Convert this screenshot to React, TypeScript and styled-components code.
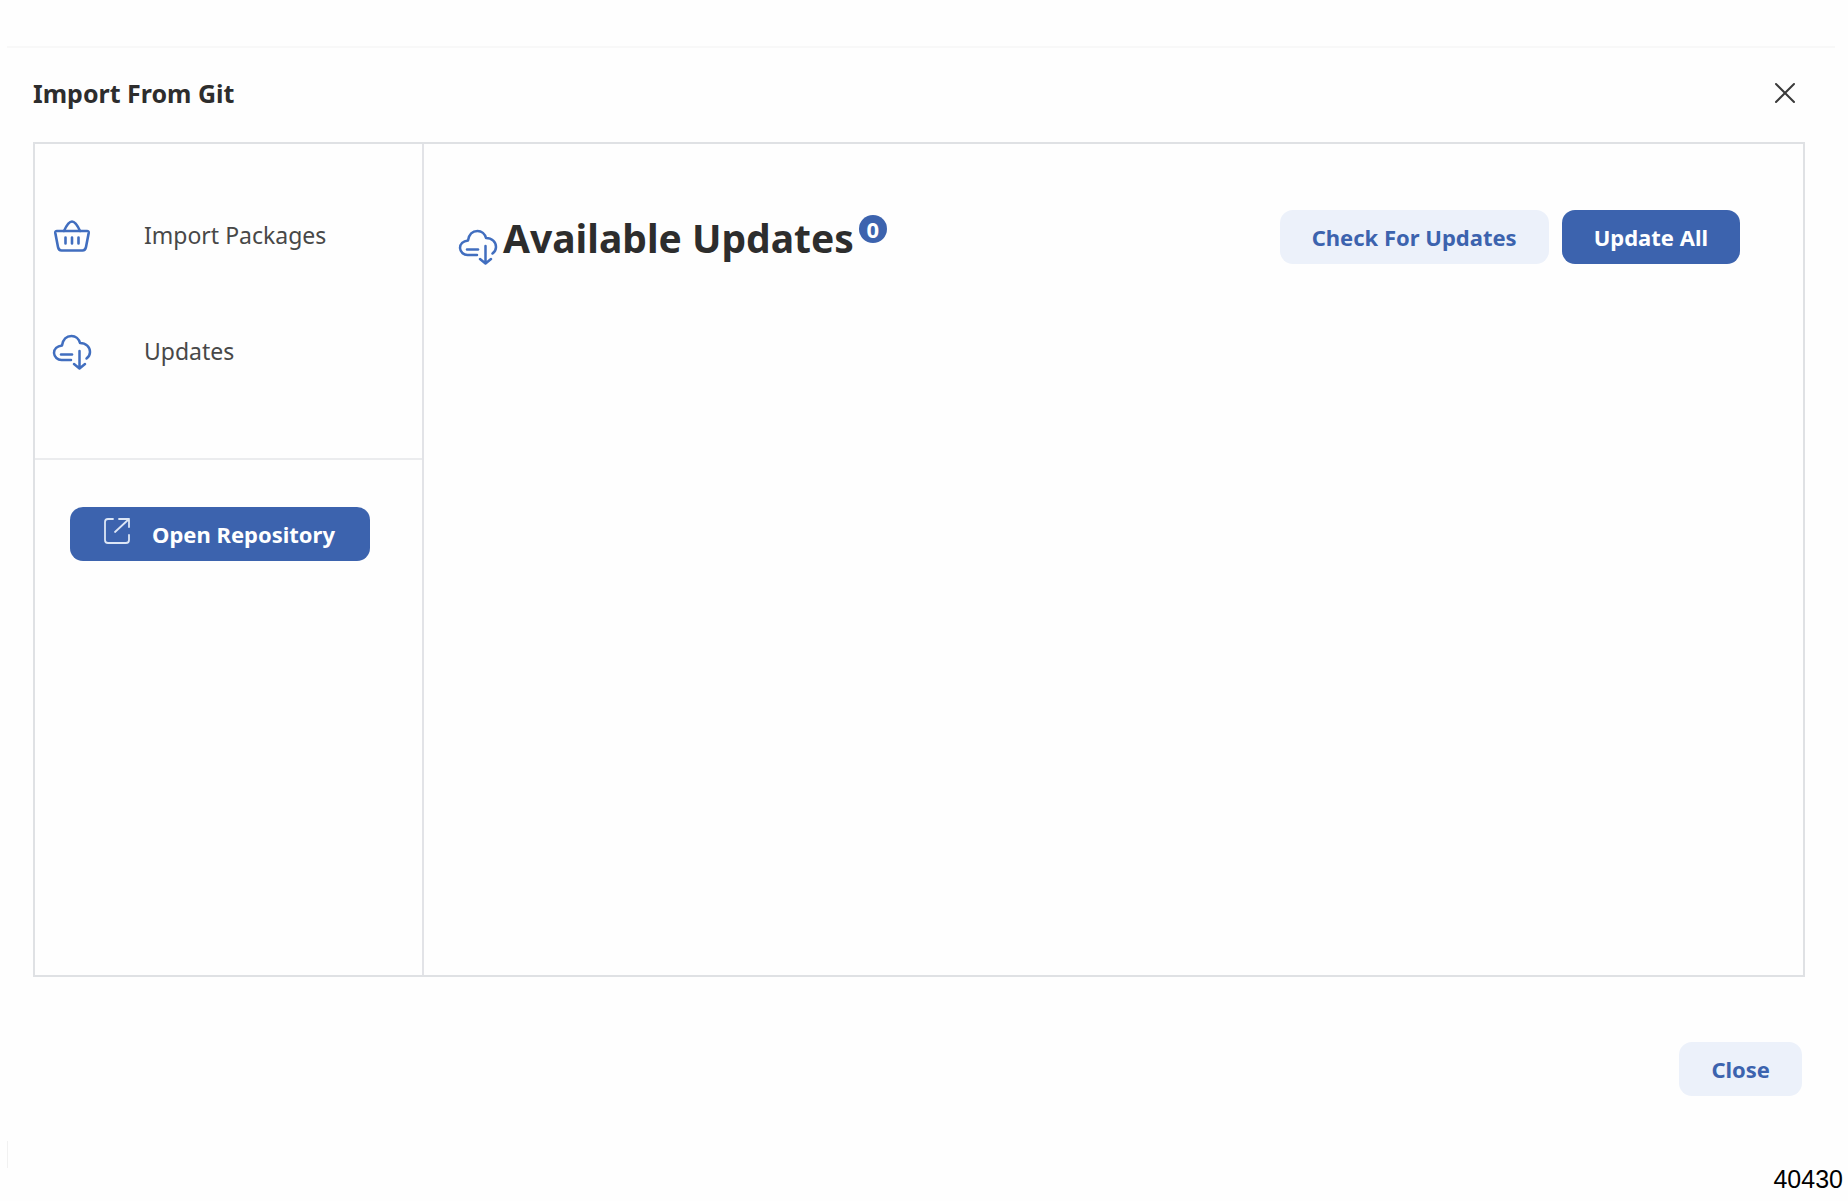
import React from "react";
import styled, { createGlobalStyle } from "styled-components";

const blue = "#3c63ae";
const ink = "#2d2d2d";
const pale = "#ecf1fa";

const GlobalStyle = createGlobalStyle`
  *, *::before, *::after { box-sizing: border-box; }
  body {
    margin: 0;
    background: #fefefe;
    color: ${ink};
    font-family: "Noto Sans", "Open Sans", sans-serif;
  }
  h1, h2, p, ul { margin: 0; padding: 0; }
`;

const Page = styled.div`
  display: flex;
  flex-direction: column;
  min-height: 100vh;
  padding: 46px 5px 0 7px;
`;

const Dialog = styled.section`
  display: flex;
  flex: 1;
  flex-direction: column;
  margin-right: 8px;
  padding: 0 30px 0 26px;
  border-top: 2px solid #f8f8f8;
`;

const Header = styled.header`
  display: flex;
  align-items: center;
  justify-content: space-between;
  height: 94px;
  padding: 0 9px 5px 0;
`;

const Title = styled.h1`
  font-size: 25px;
  line-height: 32px;
  font-weight: 700;
`;

const IconButton = styled.button`
  display: flex;
  padding: 0;
  border: 0;
  background: none;
  color: #3a3a3a;
  cursor: pointer;
`;

const Panel = styled.div`
  display: grid;
  grid-template-columns: 389px 1fr;
  flex: 1;
  border: 2px solid #dfe1e4;
`;

const Sidebar = styled.aside`
  border-right: 2px solid #e2e3e7;
`;

const NavList = styled.ul`
  display: flex;
  flex-direction: column;
  gap: 76px;
  height: 316px;
  padding: 71px 17px 0;
  border-bottom: 2px solid #ebecee;
  list-style: none;
`;

const NavLink = styled.a`
  display: flex;
  align-items: center;
  gap: 52px;
  height: 40px;
  color: #484848;
  font-size: 23px;
  line-height: 32px;
  text-decoration: none;
`;

const SidebarActions = styled.div`
  padding: 47px 35px;
`;

const Button = styled.button<{ $primary?: boolean; $wide?: boolean }>`
  display: flex;
  align-items: center;
  justify-content: ${(p) => (p.$wide ? "flex-start" : "center")};
  gap: 20px;
  width: ${(p) => (p.$wide ? "300px" : "auto")};
  height: 54px;
  padding: 0 32px;
  border: 0;
  border-radius: 13px;
  background: ${(p) => (p.$primary ? blue : pale)};
  color: ${(p) => (p.$primary ? "#fff" : blue)};
  font-family: inherit;
  font-size: 22px;
  font-weight: 700;
  line-height: 32px;
  white-space: nowrap;
  cursor: pointer;
`;

const Content = styled.main`
  display: flex;
  align-items: flex-start;
  justify-content: space-between;
  padding: 66px 63px 0 34px;
`;

const HeadingGroup = styled.div`
  display: flex;
  align-items: flex-end;
  gap: 5px;
  height: 56px;
`;

const Heading = styled.h2`
  font-size: 39px;
  line-height: 56px;
  font-weight: 700;
`;

const Badge = styled.span`
  display: flex;
  align-items: center;
  justify-content: center;
  align-self: flex-start;
  width: 28px;
  height: 28px;
  margin-top: 5px;
  border-radius: 50%;
  background: ${blue};
  color: #fff;
  font-size: 22px;
  font-weight: 700;
  line-height: 28px;
`;

const ButtonGroup = styled.div`
  display: flex;
  gap: 13px;
`;

const Footer = styled.footer`
  display: flex;
  justify-content: flex-end;
  padding: 65px 3px 45px 0;
`;

const PageFoot = styled.div`
  display: flex;
  align-items: flex-start;
  justify-content: space-between;
  height: 60px;
`;

const CornerEdge = styled.div`
  width: 1px;
  height: 27px;
  background: #f1f1f1;
`;

const FigureNumber = styled.p`
  padding-top: 22px;
  font-family: "Liberation Sans", Arial, sans-serif;
  font-size: 25px;
  line-height: 32px;
  color: #000;
`;

const BasketIcon = () => (
  <svg width="40" height="40" viewBox="0 0 40 40" fill="none" stroke="#416ebf" strokeWidth="2.6" strokeLinecap="round" strokeLinejoin="round" aria-hidden="true">
    <path d="M5 16h30q2 0 1.700 2l-2.700 14q-.7 3.500-3.500 3.500h-21q-2.800 0-3.500-3.500L3.300 18q-.3-2 1.700-2Z" />
    <path d="M12 16c2-4.500 4.500-9.500 8-9.500s6 5 8 9.500" />
    <path d="M13.500 22.500v6M20 22.500v6M26.500 22.500v6" />
  </svg>
);

const CloudIcon = () => (
  <svg width="40" height="40" viewBox="0 0 40 40" fill="none" stroke="#416ebf" strokeWidth="2.5" strokeLinecap="round" strokeLinejoin="round" aria-hidden="true">
    <path d="M19 29H9.500A7.500 7.500 0 0 1 2 22c0-4 3-7 8-7.500C11 8.500 14.500 5 19.500 5c4 0 7.500 3 8.500 7 6 0 10 4 10 9 0 2.500-1.500 5-3.500 6.500" />
    <path d="M9 23.500h11" />
    <path d="M27.500 20v16.500M22 33l5.500 4.500L33 33" />
  </svg>
);

const OpenIcon = () => (
  <svg width="30" height="34" viewBox="0 0 30 34" fill="none" stroke="#dce6f6" strokeWidth="1.800" strokeLinecap="round" strokeLinejoin="round" aria-hidden="true">
    <path d="M11 2H6Q3 2 3 5v18q0 3 3 3h18q3 0 3-3v-5" />
    <path d="M17 2h10v8M27 2 13 15" />
  </svg>
);

const CloseIcon = () => (
  <svg width="22" height="22" viewBox="0 0 22 22" fill="none" stroke="currentColor" strokeWidth="2" strokeLinecap="round" aria-hidden="true">
    <path d="m2 2 18 18M20 2 2 20" />
  </svg>
);

export default function App() {
  return (
    <>
      <GlobalStyle />
      <Page>
        <Dialog role="dialog" aria-labelledby="dialog-title">
          <Header>
            <Title id="dialog-title">Import From Git</Title>
            <IconButton type="button" aria-label="Close dialog">
              <CloseIcon />
            </IconButton>
          </Header>
          <Panel>
            <Sidebar>
              <nav>
                <NavList>
                  <li>
                    <NavLink href="#packages">
                      <BasketIcon />
                      Import Packages
                    </NavLink>
                  </li>
                  <li>
                    <NavLink href="#updates">
                      <CloudIcon />
                      Updates
                    </NavLink>
                  </li>
                </NavList>
              </nav>
              <SidebarActions>
                <Button type="button" $primary $wide>
                  <OpenIcon />
                  Open Repository
                </Button>
              </SidebarActions>
            </Sidebar>
            <Content>
              <HeadingGroup>
                <CloudIcon />
                <Heading>Available Updates</Heading>
                <Badge>0</Badge>
              </HeadingGroup>
              <ButtonGroup>
                <Button type="button">Check For Updates</Button>
                <Button type="button" $primary>
                  Update All
                </Button>
              </ButtonGroup>
            </Content>
          </Panel>
          <Footer>
            <Button type="button">Close</Button>
          </Footer>
        </Dialog>
        <PageFoot>
          <CornerEdge />
          <FigureNumber>40430</FigureNumber>
        </PageFoot>
      </Page>
    </>
  );
}
